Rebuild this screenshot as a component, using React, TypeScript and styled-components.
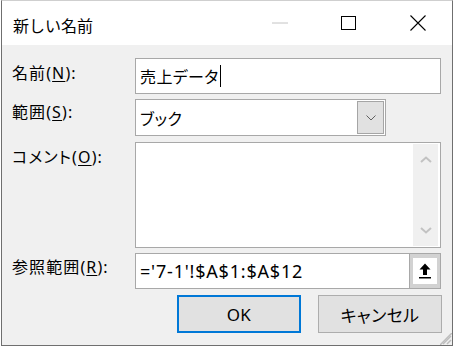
import React from 'react';
import styled, { createGlobalStyle } from 'styled-components';

const GlobalStyle = createGlobalStyle`
  html, body {
    margin: 0;
    padding: 0;
    background: #ffffff;
  }
  body {
    font-family: "Noto Sans", "Noto Sans CJK JP", sans-serif;
    color: #000;
  }
`;

const Page = styled.div`
  width: 453px;
  height: 347px;
  padding-left: 1px;
  box-sizing: border-box;
  background: #ffffff;
`;

const Window = styled.div`
  position: relative;
  width: 452px;
  height: 346px;
  box-sizing: border-box;
  border: 1px solid #6f6f6f;
  border-top-color: #cfcfcf;
  background: #f0f0f0;
  display: flex;
  flex-direction: column;
`;

const TitleBar = styled.div`
  height: 44px;
  background: #ffffff;
  display: flex;
  align-items: center;
  padding-left: 11px;
`;

const TitleText = styled.div`
  font-family: "Noto Sans CJK JP", sans-serif;
  font-size: 16px;
  line-height: 20px;
  margin-top: 4px;
  flex: 1;
`;

const CaptionButton = styled.div`
  width: 69px;
  height: 44px;
  display: flex;
  align-items: center;
  justify-content: center;
`;

const Form = styled.div`
  display: flex;
  flex-direction: column;
  padding: 0 10px 0 10px;
  font-feature-settings: "palt";
`;

const Row = styled.div<{ $top: number }>`
  display: grid;
  grid-template-columns: 123px 306px;
  margin-top: ${(p) => p.$top}px;
`;

const Label = styled.div<{ $pad: number }>`
  font-size: 16px;
  line-height: 24px;
  padding-top: ${(p) => p.$pad}px;
  letter-spacing: 1.1px;
  u {
    text-decoration: underline;
    text-underline-offset: 2px;
  }
`;

const TextBox = styled.div<{ $h: number }>`
  height: ${(p) => p.$h}px;
  box-sizing: border-box;
  border: 1px solid #a8a8a8;
  background: #ffffff;
  display: flex;
  align-items: center;
  padding-left: 4px;
  font-size: 16px;
  letter-spacing: 0.4px;
`;

const Caret = styled.span`
  display: inline-block;
  width: 1px;
  height: 22px;
  background: #000;
  margin-left: 1px;
`;

const Select = styled.div`
  width: 251px;
  height: 37px;
  box-sizing: border-box;
  border: 1px solid #a8a8a8;
  background: #ffffff;
  display: flex;
  align-items: center;
  padding: 1px 1px 1px 4px;
  font-size: 16px;
  letter-spacing: 0.4px;
`;

const SelectValue = styled.div`
  flex: 1;
`;

const DropButton = styled.div`
  width: 27px;
  height: 33px;
  box-sizing: border-box;
  border: 1px solid #a5a5a5;
  background: #e1e1e1;
  display: flex;
  align-items: center;
  justify-content: center;
`;

const Memo = styled.div`
  height: 106px;
  box-sizing: border-box;
  border: 1px solid #a8a8a8;
  background: #ffffff;
  display: flex;
  justify-content: flex-end;
  padding: 1px 2px 1px 0;
`;

const ScrollBar = styled.div`
  width: 25px;
  background: #f0f0f0;
  display: flex;
  flex-direction: column;
  justify-content: space-between;
  align-items: center;
  padding: 12px 0 12px;
`;

const RefBox = styled.div`
  height: 36px;
  box-sizing: border-box;
  border: 1px solid #a8a8a8;
  background: #ffffff;
  display: flex;
  align-items: stretch;
  font-size: 18px;
`;

const RefText = styled.div`
  flex: 1;
  display: flex;
  align-items: center;
  padding-left: 4px;
  letter-spacing: 0.8px;
`;

const RefButton = styled.div`
  width: 31px;
  box-sizing: border-box;
  border-left: 1px solid #a8a8a8;
  background: #d2d2d2;
  padding: 4px 3px;
  display: flex;
`;

const RefButtonFace = styled.div`
  flex: 1;
  background: #ffffff;
  display: flex;
  align-items: center;
  justify-content: center;
`;

const ButtonRow = styled.div`
  display: flex;
  justify-content: flex-end;
  gap: 17px;
  margin-top: 6px;
`;

const DialogButton = styled.div<{ $default?: boolean }>`
  width: 124px;
  height: 38px;
  box-sizing: border-box;
  background: #e1e1e1;
  border: ${(p) => (p.$default ? '2px solid #0078d7' : '1px solid #adadad')};
  display: flex;
  align-items: center;
  justify-content: center;
  font-size: 17px;
  letter-spacing: 0.4px;
`;

const Grip = styled.svg`
  position: absolute;
  right: 0;
  bottom: 0;
`;

export default function App() {
  return (
    <Page>
      <GlobalStyle />
      <Window>
        <TitleBar>
          <TitleText>新しい名前</TitleText>
          <CaptionButton>
            <svg width="16" height="2" viewBox="0 0 16 2">
              <line x1="0" y1="1" x2="16" y2="1" stroke="#c4c4c4" strokeWidth="1" />
            </svg>
          </CaptionButton>
          <CaptionButton>
            <svg width="15" height="14" viewBox="0 0 15 14">
              <rect x="0.5" y="0.5" width="14" height="13" fill="none" stroke="#000" strokeWidth="1" />
            </svg>
          </CaptionButton>
          <CaptionButton>
            <svg width="16" height="16" viewBox="0 0 16 16">
              <path d="M0.5 0.5 L15.5 15.5 M15.5 0.5 L0.5 15.5" stroke="#000" strokeWidth="1.1" />
            </svg>
          </CaptionButton>
        </TitleBar>
        <Form>
          <Row $top={13}>
            <Label $pad={3}>
              名前(<u>N</u>):
            </Label>
            <TextBox $h={36}>
              売上データ
              <Caret />
            </TextBox>
          </Row>
          <Row $top={5}>
            <Label $pad={1}>
              範囲(<u>S</u>):
            </Label>
            <Select>
              <SelectValue>ブック</SelectValue>
              <DropButton>
                <svg width="10" height="6" viewBox="0 0 10 6">
                  <path d="M0.5 0.5 L5 5 L9.5 0.5" fill="none" stroke="#606060" strokeWidth="1" />
                </svg>
              </DropButton>
            </Select>
          </Row>
          <Row $top={6}>
            <Label $pad={3}>
              コメント(<u>O</u>):
            </Label>
            <Memo>
              <ScrollBar>
                <svg width="12" height="7" viewBox="0 0 12 7">
                  <path d="M1 6 L6 1.5 L11 6" fill="none" stroke="#c2c2c2" strokeWidth="2" />
                </svg>
                <svg width="12" height="7" viewBox="0 0 12 7">
                  <path d="M1 1 L6 5.5 L11 1" fill="none" stroke="#c2c2c2" strokeWidth="2" />
                </svg>
              </ScrollBar>
            </Memo>
          </Row>
          <Row $top={5}>
            <Label $pad={2}>
              参照範囲(<u>R</u>):
            </Label>
            <RefBox>
              <RefText>='7-1'!$A$1:$A$12</RefText>
              <RefButton>
                <RefButtonFace>
                  <svg width="12" height="16" viewBox="0 0 12 16">
                    <path d="M6 0.5 L11.5 6.5 L8 6.5 L8 12 L4 12 L4 6.5 L0.5 6.5 Z" fill="#000" />
                    <rect x="0" y="14" width="12" height="1.5" fill="#000" />
                  </svg>
                </RefButtonFace>
              </RefButton>
            </RefBox>
          </Row>
          <ButtonRow>
            <DialogButton $default>OK</DialogButton>
            <DialogButton>キャンセル</DialogButton>
          </ButtonRow>
        </Form>
        <Grip width="12" height="12" viewBox="0 0 12 12">
          <path d="M11 3 L3 11 M11 7 L7 11" stroke="#bdbdbd" strokeWidth="1.5" />
          <path d="M12 0 L0 12" stroke="#bdbdbd" strokeWidth="1.5" />
        </Grip>
      </Window>
    </Page>
  );
}
